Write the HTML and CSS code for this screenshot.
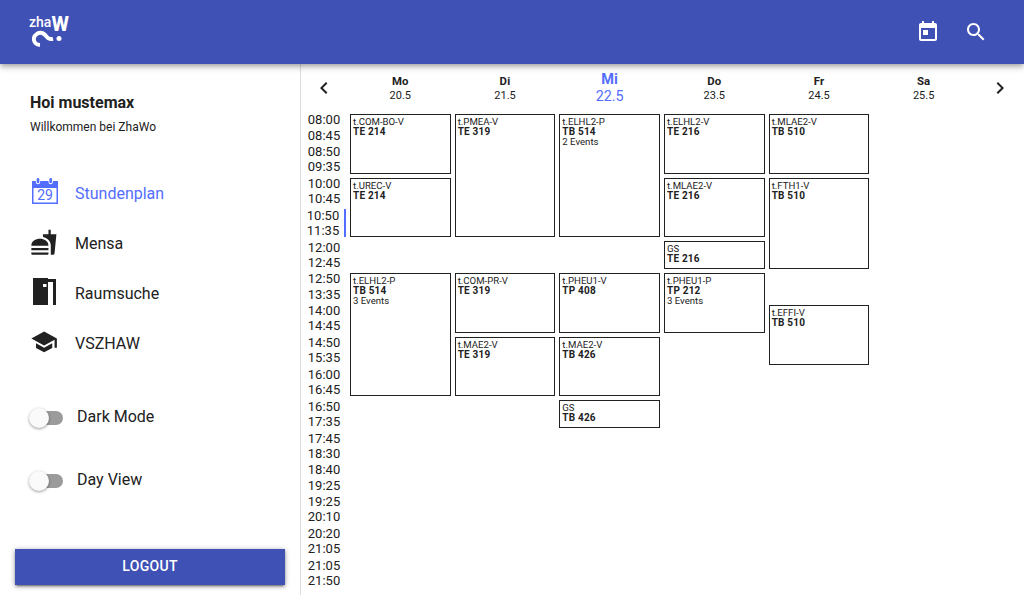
FILE: index.html
```html
<!DOCTYPE html>
<html lang="de">
<head>
<meta charset="utf-8">
<title>ZhaWo</title>
<link rel="stylesheet" href="styles.css">
</head>
<body>
<header class="topbar">
  <div class="logo">
    <div class="logo-text">zha<b>W</b></div>
    <svg class="logo-mark" width="30" height="18" viewBox="0 0 30 18"><path d="M8 15C1 14.500 0 7 5 3.800C9 1.500 12.500 4 14.500 6.500C16 8.800 18 9.500 21 8.800" fill="none" stroke="#fff" stroke-width="3.900"/><circle cx="27" cy="8.500" r="2.500" fill="#fff"/></svg>
  </div>
  <div class="actions">
    <svg width="24" height="24" viewBox="0 0 24 24"><path fill="#fff" d="M19 3h-1V1h-2v2H8V1H6v2H5c-1.110 0-2 .9-2 2v14c0 1.100.89 2 2 2h14c1.100 0 2-.9 2-2V5c0-1.100-.9-2-2-2zm0 16H5V8h14v11zM7 10h5v5H7z"/></svg>
    <svg width="24" height="24" viewBox="0 0 24 24"><path fill="#fff" d="M15.500 14h-.79l-.28-.27C15.410 12.590 16 11.110 16 9.500 16 5.910 13.090 3 9.500 3S3 5.910 3 9.500 5.910 16 9.500 16c1.610 0 3.090-.59 4.230-1.570l.27.28v.79l5 4.990L20.490 19l-4.990-5zm-6 0C7.010 14 5 11.990 5 9.500S7.010 5 9.500 5 14 7.010 14 9.500 11.990 14 9.500 14z"/></svg>
  </div>
</header>
<div class="layout">
  <aside class="sidebar">
    <h1 class="greeting">Hoi mustemax</h1>
    <p class="welcome">Willkommen bei ZhaWo</p>
    <nav class="nav">
      <a class="nav-item active"><svg viewBox="0 0 30 30"><path fill="currentColor" fill-rule="evenodd" d="M2 3h3.800v1a2.200 2.200 0 0 0 4.400 0V3h8.300v1a2.200 2.200 0 0 0 4.400 0V3H28V26H2zM3.500 10v14.500h23V10z"/><rect x="6.700" y="0" width="2.600" height="5.300" rx="1.300" fill="currentColor"/><rect x="19.400" y="0" width="2.600" height="5.300" rx="1.300" fill="currentColor"/><text x="15" y="21.500" text-anchor="middle" class="icon-date">29</text></svg>Stundenplan</a>
      <a class="nav-item"><svg viewBox="0 0 30 30"><path fill="currentColor" transform="translate(.2 .6) scale(1.140)" d="M18.060 22.990h1.660c.84 0 1.530-.64 1.630-1.460L23 5.050h-5V1h-1.970v4.050h-4.970l.3 2.340c1.710.47 3.310 1.320 4.270 2.260 1.440 1.420 2.430 2.890 2.430 5.290v8.050zM1 21.990V21h15.030v.99c0 .55-.45 1-1.010 1H2.010c-.56 0-1.010-.45-1.010-1zm15.030-7c0-8-15.030-8-15.030 0h15.030zM1.020 17h15v2h-15z"/></svg>Mensa</a>
      <a class="nav-item"><svg viewBox="0 0 30 30"><path fill="currentColor" fill-rule="evenodd" d="M3 0h15v1h8v26h-3V4h-5v23H3zM13 6v3h3.500V6z"/></svg>Raumsuche</a>
      <a class="nav-item"><svg viewBox="0 0 30 30"><path fill="currentColor" transform="translate(.2 0) scale(1.160)" d="M5 13.180v4L12 21l7-3.820v-4L12 17l-7-3.820zM12 3L1 9l11 6 9-4.910V17h2V9L12 3z"/></svg>VSZHAW</a>
    </nav>
    <div class="toggles">
      <label class="toggle"><span class="track"><span class="knob"></span></span>Dark Mode</label>
      <label class="toggle"><span class="track"><span class="knob"></span></span>Day View</label>
    </div>
    <button class="logout">LOGOUT</button>
  </aside>
  <main class="schedule">
    <div class="days">
      <svg class="arrow" width="24" height="24" viewBox="0 0 24 24"><path fill="currentColor" d="M15.410 7.410L14 6l-6 6 6 6 1.410-1.410L10.830 12z"/></svg>
      <div class="day"><b>Mo</b><span>20.5</span></div>
      <div class="day"><b>Di</b><span>21.5</span></div>
      <div class="day today"><b>Mi</b><span>22.5</span></div>
      <div class="day"><b>Do</b><span>23.5</span></div>
      <div class="day"><b>Fr</b><span>24.5</span></div>
      <div class="day"><b>Sa</b><span>25.5</span></div>
      <svg class="arrow" width="24" height="24" viewBox="0 0 24 24"><path fill="currentColor" d="M10 6L8.590 7.410 13.170 12l-4.580 4.590L10 18l6-6z"/></svg>
    </div>
    <div class="board">
      <div class="times">
        <div class="slot">08:00<br>08:45</div>
        <div class="slot">08:50<br>09:35</div>
        <div class="slot">10:00<br>10:45</div>
        <div class="slot now">10:50<br>11:35</div>
        <div class="slot">12:00<br>12:45</div>
        <div class="slot">12:50<br>13:35</div>
        <div class="slot">14:00<br>14:45</div>
        <div class="slot">14:50<br>15:35</div>
        <div class="slot">16:00<br>16:45</div>
        <div class="slot">16:50<br>17:35</div>
        <div class="slot">17:45<br>18:30</div>
        <div class="slot">18:40<br>19:25</div>
        <div class="slot">19:25<br>20:10</div>
        <div class="slot">20:20<br>21:05</div>
        <div class="slot">21:05<br>21:50</div>
      </div>
      <div class="column">
        <div class="event r1 s2">t.COM-BO-V<b>TE 214</b></div>
        <div class="event r3 s2">t.UREC-V<b>TE 214</b></div>
        <div class="event r6 s4">t.ELHL2-P<b>TB 514</b>3 Events</div>
      </div>
      <div class="column">
        <div class="event r1 s4">t.PMEA-V<b>TE 319</b></div>
        <div class="event r6 s2">t.COM-PR-V<b>TE 319</b></div>
        <div class="event r8 s2">t.MAE2-V<b>TE 319</b></div>
      </div>
      <div class="column">
        <div class="event r1 s4">t.ELHL2-P<b>TB 514</b>2 Events</div>
        <div class="event r6 s2">t.PHEU1-V<b>TP 408</b></div>
        <div class="event r8 s2">t.MAE2-V<b>TB 426</b></div>
        <div class="event r10 s1">GS<b>TB 426</b></div>
      </div>
      <div class="column">
        <div class="event r1 s2">t.ELHL2-V<b>TE 216</b></div>
        <div class="event r3 s2">t.MLAE2-V<b>TE 216</b></div>
        <div class="event r5 s1">GS<b>TE 216</b></div>
        <div class="event r6 s2">t.PHEU1-P<b>TP 212</b>3 Events</div>
      </div>
      <div class="column">
        <div class="event r1 s2">t.MLAE2-V<b>TB 510</b></div>
        <div class="event r3 s3">t.FTH1-V<b>TB 510</b></div>
        <div class="event r7 s2">t.EFFI-V<b>TB 510</b></div>
      </div>
      <div class="column"></div>
    </div>
  </main>
</div>
</body>
</html>
```
FILE: styles.css
```css
* { box-sizing: border-box; }
body {
  margin: 0;
  height: 595px;
  overflow: hidden;
  display: flex;
  flex-direction: column;
  font-family: Roboto, sans-serif;
  color: #212121;
  background: #fff;
}
.topbar {
  position: relative;
  z-index: 1;
  height: 64px;
  flex: none;
  display: flex;
  justify-content: space-between;
  align-items: center;
  padding: 0 36px 0 29px;
  color: #fff;
  background: #3f51b5;
  box-shadow: 0 2px 4px -1px rgba(0,0,0,.2), 0 4px 5px rgba(0,0,0,.14), 0 1px 10px rgba(0,0,0,.12);
}
.logo { height: 34px; display: flex; flex-direction: column; }
.logo-text { height: 15px; display: flex; align-items: center; font-size: 14px; font-weight: 500; line-height: 13px; white-space: nowrap; }
.logo-text b { font-size: 20px; font-weight: 800; line-height: 17px; padding-top: 4px; }
.logo-mark { margin-left: 3px; }
.actions { display: flex; gap: 24px; }
.layout { flex: 1; min-height: 0; display: flex; }
.sidebar {
  width: 301px;
  flex: none;
  display: flex;
  flex-direction: column;
  padding: 29px 15px 10px;
  border-right: 1px solid #dedede;
}
.greeting { margin: 0 15px; font-size: 16px; line-height: 20px; font-weight: 700; }
.welcome { margin: 6px 15px 0; font-size: 12px; line-height: 16px; }
.nav { margin-top: 33px; padding-left: 15px; }
.nav-item { height: 50px; display: flex; align-items: center; font-size: 16px; }
.nav-item svg { width: 30px; height: 30px; margin-right: 15px; }
.active { color: #536dfe; }
.icon-date { font-size: 14px; fill: currentColor; }
.toggles { display: flex; flex-direction: column; gap: 43px; margin: 38px 0 0 16px; }
.toggle { height: 20px; display: flex; align-items: center; gap: 14px; font-size: 16px; }
.track { width: 32px; height: 14px; margin-top: 3px; display: flex; align-items: center; border-radius: 7px; background: #9b9b9b; }
.knob { width: 20px; height: 20px; flex: none; margin-left: -2px; border-radius: 50%; background: #fafafa; box-shadow: 0 1px 3px rgba(0,0,0,.4); }
.logout {
  margin-top: auto;
  height: 36px;
  padding: 0 0 2px;
  border: 0;
  color: #fff;
  background: #3f51b5;
  font: 500 14px Roboto, sans-serif;
  letter-spacing: .3px;
  box-shadow: 0 3px 1px -2px rgba(0,0,0,.2), 0 2px 2px rgba(0,0,0,.14), 0 1px 5px rgba(0,0,0,.4);
}
.schedule { width: 724px; margin-left: -1px; flex: none; }
.days { height: 48px; display: grid; grid-template-columns: 48px repeat(6, 1fr) 48px; align-items: center; }
.arrow { justify-self: center; }
.day { display: flex; flex-direction: column; align-items: center; padding-top: 2px; font-size: 11px; line-height: 14px; }
.day b { font-size: 11.400px; line-height: 13px; margin-bottom: 1px; letter-spacing: .2px; }
.today { padding-top: 0; color: #536dfe; font-size: 14.300px; line-height: 17px; }
.today b { font-size: 14.500px; line-height: 17px; margin-bottom: 0; }
.board { display: grid; grid-template-columns: 48px repeat(6, 1fr) 48px; }
.times, .column { display: grid; grid-template-rows: repeat(15, 31.820px); }
.slot { margin: 1.700px 2px 2.300px; display: flex; align-items: center; justify-content: center; font-size: 13px; line-height: 15.200px; }
.now { border-right: 2px solid #536dfe; }
.event { margin: 2px; padding: 2px; border: 1px solid #212121; font-size: 9.600px; line-height: 10px; overflow: hidden; }
.event b { display: block; font-size: 10px; letter-spacing: .2px; }
.r1 { grid-row-start: 1; }
.r3 { grid-row-start: 3; }
.r5 { grid-row-start: 5; }
.r6 { grid-row-start: 6; }
.r7 { grid-row-start: 7; }
.r8 { grid-row-start: 8; }
.r10 { grid-row-start: 10; }
.s1 { grid-row-end: span 1; }
.s2 { grid-row-end: span 2; }
.s3 { grid-row-end: span 3; }
.s4 { grid-row-end: span 4; }
```
